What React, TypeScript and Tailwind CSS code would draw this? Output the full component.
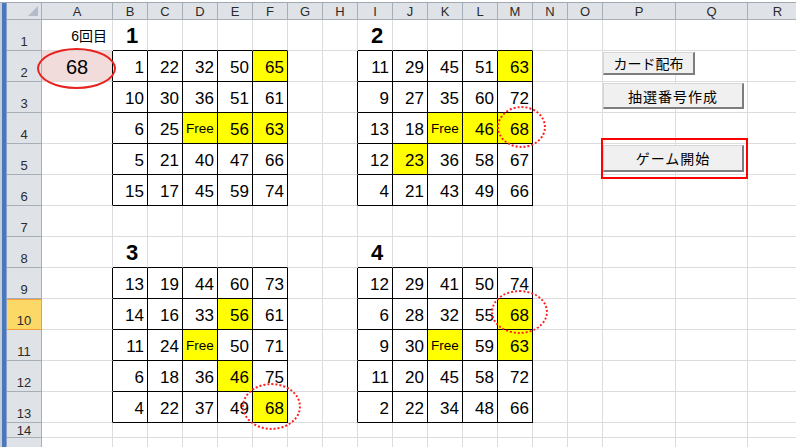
import React from 'react'

const COLS = ['A', 'B', 'C', 'D', 'E', 'F', 'G', 'H', 'I', 'J', 'K', 'L', 'M', 'N', 'O', 'P', 'Q', 'R']
const ROWS = Array.from({ length: 15 }, (_, i) => i + 1)

// '*' marks a hit (yellow cell)
const cards = [
  {
    r0: 2,
    c0: 1,
    nums: [
      ['1', '22', '32', '50', '65*'],
      ['10', '30', '36', '51', '61'],
      ['6', '25', 'Free*', '56*', '63*'],
      ['5', '21', '40', '47', '66'],
      ['15', '17', '45', '59', '74'],
    ],
  },
  {
    r0: 2,
    c0: 8,
    nums: [
      ['11', '29', '45', '51', '63*'],
      ['9', '27', '35', '60', '72'],
      ['13', '18', 'Free*', '46*', '68*'],
      ['12', '23*', '36', '58', '67'],
      ['4', '21', '43', '49', '66'],
    ],
  },
  {
    r0: 9,
    c0: 1,
    nums: [
      ['13', '19', '44', '60', '73'],
      ['14', '16', '33', '56*', '61'],
      ['11', '24', 'Free*', '50', '71'],
      ['6', '18', '36', '46*', '75'],
      ['4', '22', '37', '49', '68*'],
    ],
  },
  {
    r0: 9,
    c0: 8,
    nums: [
      ['12', '29', '41', '50', '74'],
      ['6', '28', '32', '55', '68*'],
      ['9', '30', 'Free*', '59', '63*'],
      ['11', '20', '45', '58', '72'],
      ['2', '22', '34', '48', '66'],
    ],
  },
]

const titles: Record<string, string> = { '1-1': '1', '1-8': '2', '8-1': '3', '8-8': '4' }

const cardCell = (r: number, c: number) => {
  for (const card of cards) {
    const i = r - card.r0
    const j = c - card.c0
    if (i >= 0 && i < 5 && j >= 0 && j < 5) {
      const raw = card.nums[i][j]
      return { text: raw.replace('*', ''), hit: raw.endsWith('*') }
    }
  }
  return null
}

const inCard = (r: number, c: number) => cardCell(r, c) !== null

const Cell = ({ r, c }: { r: number; c: number }) => {
  const rightBlack = inCard(r, c) || inCard(r, c + 1)
  const bottomBlack = inCard(r, c) || inCard(r + 1, c)
  const lines = `border-r border-b ${rightBlack ? 'border-r-black' : 'border-r-[#dadcdd]'} ${
    bottomBlack ? 'border-b-black' : 'border-b-[#dadcdd]'
  }`
  const card = cardCell(r, c)

  if (card) {
    const bg = card.hit ? 'bg-[#ffff00]' : 'bg-white'
    if (card.text === 'Free') {
      return (
        <div className={`${lines} ${bg} flex items-end justify-center pb-[8px] text-[13.5px] leading-none`}>
          Free
        </div>
      )
    }
    return (
      <div className={`${lines} ${bg} flex items-end justify-end pr-[3px] pb-[5px] text-[17px] leading-none`}>
        {card.text}
      </div>
    )
  }

  const title = titles[`${r}-${c}`]
  if (title) {
    return (
      <div className={`${lines} flex items-end pl-[13px] pb-[3px] text-[22px] font-bold leading-none`}>{title}</div>
    )
  }

  if (r === 1 && c === 0) {
    return (
      <div
        className={`${lines} flex items-end justify-end pr-[5px] pb-[7px] text-[14px] leading-none`}
        style={{ fontFamily: '"Liberation Sans", "Noto Sans CJK JP", sans-serif' }}
      >
        6回目
      </div>
    )
  }

  if (r === 2 && c === 0) {
    return (
      <div className={`${lines} bg-[#f2dcdb] flex items-end justify-center pb-[4px] text-[20px] leading-none`}>
        68
      </div>
    )
  }

  return <div className={lines} />
}

const SheetButton = ({ label, className }: { label: string; className: string }) => (
  <div
    className={`absolute flex items-center justify-center bg-[#f0f0f0] border border-[#d6d6d6] border-r-2 border-b-2 border-r-[#7d7d7d] border-b-[#7d7d7d] text-[14px] leading-none text-black ${className}`}
    style={{ fontFamily: '"Noto Sans CJK JP", "Liberation Sans", sans-serif' }}
  >
    {label}
  </div>
)

export default function App() {
  return (
    <div
      className="relative w-[796px] h-[447px] overflow-hidden bg-white text-black"
      style={{ fontFamily: '"Liberation Sans", Arial, sans-serif' }}
    >
      {/* top strip */}
      <div className="h-[3px] bg-white border-b border-[#a0a8b2]" />

      <div className="flex">
        {/* left blue bar */}
        <div className="w-[7px] shrink-0 h-[460px] border-l-2 border-[#c9ced6] bg-[#4a78bf] border-r border-r-[#8aa2c8]" />

        <div className="grid grid-cols-[35px_71px_repeat(14,35px)_73px_72px_60px] grid-rows-[17px_repeat(13,31px)_15px_31px]">
          {/* corner */}
          <div className="relative bg-[#dfe3e8] border-r border-b border-[#a6aeb8]">
            <div className="absolute right-[3px] bottom-[3px] w-0 h-0 border-l-[10px] border-l-transparent border-b-[10px] border-b-[#b3bcc8]" />
          </div>
          {COLS.map((col) => (
            <div
              key={col}
              className="bg-[#dfe3e8] border-r border-b border-[#a6aeb8] flex items-center justify-center text-[13px] leading-none text-[#2b2b2b]"
            >
              {col}
            </div>
          ))}

          {ROWS.map((r) => (
            <React.Fragment key={r}>
              {r === 10 ? (
                <div className="bg-[#fcd867] border-r border-b border-[#f29d38] shadow-[inset_0_1px_0_#f29d38] flex items-end justify-center pb-[2px] text-[13px] leading-none text-[#2b2b2b]">
                  {r}
                </div>
              ) : (
                <div
                  className={`bg-[#dfe3e8] border-r border-b border-[#a6aeb8] flex justify-center text-[13px] leading-none text-[#2b2b2b] ${
                    r === 14 ? 'items-center' : 'items-end pb-[2px]'
                  }`}
                >
                  {r < 15 ? r : null}
                </div>
              )}
              {COLS.map((_, c) => (
                <Cell key={c} r={r} c={c} />
              ))}
            </React.Fragment>
          ))}
        </div>
      </div>

      {/* ellipse around current number */}
      <div className="absolute left-[37px] top-[48px] w-[79px] h-[41px] rounded-[50%] border-2 border-[#e8231e]" />

      {/* dotted hit markers */}
      <div className="absolute left-[497px] top-[106px] w-[49px] h-[42px] rounded-[50%] border-2 border-dotted border-[#ff2020]" />
      <div className="absolute left-[491px] top-[290px] w-[57px] h-[44px] rounded-[50%] border-2 border-dotted border-[#ff2020]" />
      <div className="absolute left-[242px] top-[383px] w-[59px] h-[47px] rounded-[50%] border-2 border-dotted border-[#ff2020]" />

      {/* macro buttons */}
      <SheetButton label="カード配布" className="left-[603px] top-[52px] w-[92px] h-[23px]" />
      <SheetButton label="抽選番号作成" className="left-[603px] top-[83px] w-[141px] h-[26px] tracking-[1px]" />
      <div className="absolute left-[601px] top-[138px] w-[147px] h-[41px] border-2 border-[#ff0000]" />
      <SheetButton label="ゲーム開始" className="left-[603px] top-[145px] w-[141px] h-[27px] tracking-[1px]" />
    </div>
  )
}
